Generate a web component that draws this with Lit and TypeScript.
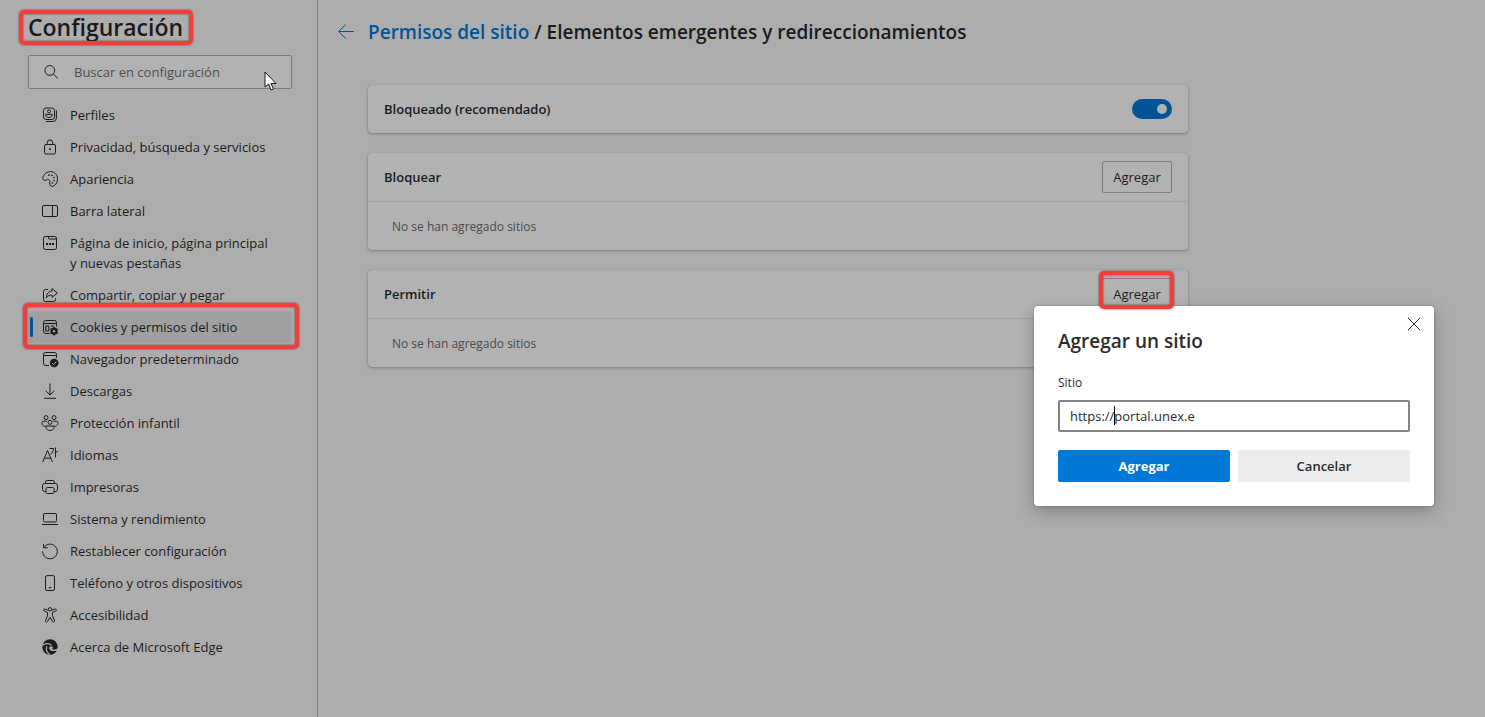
import { LitElement, html, css, svg, nothing } from "lit";
import { customElement, property, state } from "lit/decorators.js";
import { classMap } from "lit/directives/class-map.js";

const icons: Record<string, unknown> = {
  search: svg`<circle cx="6.8" cy="6.4" r="4.9"/><path d="M10.4 10 15 14.6"/>`,
  profiles: svg`<rect x="1.5" y="1" width="11" height="11.5" rx="2.6"/><circle cx="7" cy="4.4" r="1.5"/><path d="M3.8 7.4h6.4v.6c0 1.7-1.4 2.5-3.2 2.5S3.8 9.7 3.8 8z"/><path d="M14.4 3.2v7.8a3.5 3.5 0 0 1-3.5 3.5H4"/>`,
  lock: svg`<rect x="2.5" y="5.5" width="11" height="9.5" rx="1.5"/><path d="M5.3 5.5V3.6a2.7 2.7 0 0 1 5.4 0v1.9"/><circle cx="8" cy="10" r=".6" fill="currentColor"/>`,
  palette: svg`<path d="M.8 6.8C1.8 3 5 .6 8.6.6c4.2 0 7 3.2 6.9 7.2-.1 4-2.5 7.5-5.2 7.5-2 0-2.8-1.4-2.5-3.2.3-1.7.1-3.3-1.5-3.6-1.4-.3-2 1-3.4.8C1.3 9.1.5 8.1.8 6.8z"/><g fill="currentColor" stroke="none"><circle cx="7" cy="4.2" r=".85"/><circle cx="10" cy="4.3" r=".85"/><circle cx="12" cy="6.5" r=".85"/><circle cx="12" cy="9.5" r=".85"/><circle cx="10.5" cy="12" r=".85"/></g>`,
  sidebar: svg`<rect x=".5" y="2.5" width="15" height="11" rx="1.5"/><path d="M10.5 2.5v11"/>`,
  home: svg`<rect x="1.5" y="1.5" width="13" height="13" rx="1.8"/><path d="M6.5 1.5v1.5a1 1 0 0 0 1 1h7"/><g fill="currentColor" stroke="none"><path d="M4 8h2v2H4zM7 8h2v2H7zM10 8h2v2h-2z"/></g>`,
  share: svg`<path d="M6 2.5H3.5a2 2 0 0 0-2 2v8a2 2 0 0 0 2 2h8a2 2 0 0 0 2-2V11"/><path d="M10 1.5 15.3 6 10 10.3V8C7.2 8 5.5 9 4.3 10.8 4.6 7 6.5 4.2 10 4z"/>`,
  cookies: svg`<path d="M7.5 14.5H4a2.5 2.5 0 0 1-2.5-2.5V3.5a2 2 0 0 1 2-2h9a2 2 0 0 1 2 2v4M1.5 4.5h13"/><path d="M3.8 7h3v5h-3zM9 7h3"/><circle cx="12" cy="12.2" r="2.5" stroke-width="2.2"/><path d="M12 8v8.4M8.4 10.1l7.2 4.2M8.4 14.3l7.2-4.2" stroke-width="1.4"/><circle cx="12" cy="12.2" r="1.2" fill="#a0a0a0" stroke="none"/>`,
  browser: svg`<path d="M7 14.5H4a2.5 2.5 0 0 1-2.5-2.5V3.5a2 2 0 0 1 2-2h9a2 2 0 0 1 2 2V7M1.5 4.5h13"/><circle cx="12.2" cy="12" r="4.3" fill="currentColor" stroke="none"/><path d="m10.2 12.1 1.4 1.4 2.7-2.8" stroke="#adadad"/>`,
  download: svg`<path d="M8 .5v11.5M3.6 7.7 8 12.1l4.4-4.4M2 15.3h12"/>`,
  family: svg`<circle cx="4" cy="2.6" r="2"/><circle cx="12" cy="2.6" r="2"/><circle cx="8" cy="7.3" r="2"/><path d="M4.7 6.2H1.4C-.9 6.2-.6 11.3 3.6 11.3M11.3 6.2h3.3c2.3 0 2 5.1-2.2 5.1"/><path d="M4 11h8v1.2c0 2-1.7 3.3-4 3.3s-4-1.3-4-3.3z"/>`,
  language: svg`<path d="M.7 15.2 5.5 3.5l5 11.7M2.4 11.2h6.5M7.5 1.5h4c0 3-1 4.5-3 5.6M13.5.5v10M13.5 4.8h2.3"/>`,
  printer: svg`<path d="M4 12.5H2.7A2.2 2.2 0 0 1 .5 10.3V6.5a2 2 0 0 1 2-2h11a2 2 0 0 1 2 2v3.8a2.2 2.2 0 0 1-2.2 2.2H12"/><path d="M3.5 4.5V3.2a1.7 1.7 0 0 1 1.7-1.7h5.6a1.7 1.7 0 0 1 1.7 1.7v1.3"/><rect x="4" y="8.5" width="8" height="6" rx="1.3"/>`,
  laptop: svg`<rect x="1.5" y="2.5" width="13" height="8.5" rx="1.5"/><path d="M0 13.5h16"/>`,
  reset: svg`<path d="M1.5.8v4h4.3M1.8 4.6A7.3 7.3 0 1 1 .7 8.3"/>`,
  phone: svg`<rect x="3.5" y=".6" width="9" height="14.9" rx="1.6"/><path d="M6.7 12.7h2.6"/>`,
  access: svg`<circle cx="8" cy="2.3" r="1.7"/><path d="M6.3 3.4 3 2.1c-1.4-.5-2 1.4-.8 1.9l3.3 1.5v3.2l-2 5c-.4 1.4 1.3 2 1.9.9L8 10.3l2.6 4.3c.6 1.1 2.3.5 1.9-.9l-2-5V5.5L13.8 4c1.2-.5.6-2.4-.8-1.9L9.7 3.4"/>`,
  edge: svg`<circle cx="8" cy="8" r="7.7" fill="currentColor" stroke="none"/><path d="M.3 6.5C3 4 7.5 4 9.5 6.2M4.8 7.3c-1.1 3.2.2 6.3 3 8.2M8 8.2c-.7 2.4 1.7 4 6.8 2.6" stroke="#adadad" stroke-width="1.3"/><path d="M7.4 8.2a2.3 2.3 0 0 1 3.5.4c.2.9-.7 1.3-.7 1.9.7.7 3.2.5 5.8-1.2v1.5L11 12c-2.3 0-3.9-1.5-3.6-3.8z" fill="#adadad" stroke="none"/>`,
  back: svg`<path d="M16 7.5H.8M7.8.4.7 7.5l7.1 7.1" stroke="#005494"/>`,
  close: svg`<path d="m2 2 12 12M14 2 2 14"/>`,
};

const icon = (name: string) =>
  html`<svg class="icon" viewBox="0 0 16 16" fill="none" stroke="currentColor" aria-hidden="true">${icons[name]}</svg>`;

const base = css`
  * { box-sizing: border-box; }
  h1, h2, p { margin: 0; }
  button, input { font: inherit; color: inherit; margin: 0; }
  .icon { display: block; width: 16px; height: 16px; flex: none; overflow: visible; }
  .mark {
    position: absolute;
    border: 4px solid #f23d3d;
    border-radius: 5px;
    box-shadow: 0 0 2px #702c2c, inset 0 0 2px #702c2c;
    pointer-events: none;
    z-index: 3;
  }
`;

const sections = [
  ["profiles", "Perfiles"],
  ["lock", "Privacidad, búsqueda y servicios"],
  ["palette", "Apariencia"],
  ["sidebar", "Barra lateral"],
  ["home", "Página de inicio, página principal y nuevas pestañas"],
  ["share", "Compartir, copiar y pegar"],
  ["cookies", "Cookies y permisos del sitio"],
  ["browser", "Navegador predeterminado"],
  ["download", "Descargas"],
  ["family", "Protección infantil"],
  ["language", "Idiomas"],
  ["printer", "Impresoras"],
  ["laptop", "Sistema y rendimiento"],
  ["reset", "Restablecer configuración"],
  ["phone", "Teléfono y otros dispositivos"],
  ["access", "Accesibilidad"],
  ["edge", "Acerca de Microsoft Edge"],
];

@customElement("settings-nav")
export class SettingsNav extends LitElement {
  @state() private selected = "cookies";

  static styles = [base, css`
    :host { display: block; padding: 10px 25px 40px 28px; }
    .head { display: flex; }
    .title { position: relative; font-size: 23px; line-height: 34px; font-weight: 600; }
    .title .mark { inset: 0 -10px -1px -9px; }
    .search {
      display: flex; align-items: center; gap: 15px;
      position: relative;
      height: 34px; margin: 11px 0 10px; padding: 0 14px;
      border: 1px solid #7d7d7d; border-radius: 2px; background: #b2b2b2;
    }
    .field { flex: 1; min-width: 0; padding: 0; border: 0; background: none; outline: none; font-size: 13px; }
    .field::placeholder { color: #4e4e4e; opacity: 1; }
    .pointer { position: absolute; right: 14px; top: 15px; width: 13px; height: 20px; }
    .item {
      position: relative;
      display: flex; gap: 12px;
      padding: 6px 16px 6px 14px;
      border-radius: 2px;
      line-height: 20px;
      color: inherit; text-decoration: none;
    }
    .item .icon { margin-top: 2px; }
    .current { background: #a0a0a0; }
    .bar { position: absolute; left: 2px; top: 6px; width: 3px; height: 20px; border-radius: 2px; background: #005494; }
    .item .mark { inset: -8px -7px -6px -5px; }
  `];

  render() {
    return html`
      <div class="head"><h1 class="title">Configuración<span class="mark"></span></h1></div>
      <div class="search">
        ${icon("search")}
        <input class="field" type="search" placeholder="Buscar en configuración" aria-label="Buscar en configuración">
        <svg class="pointer" viewBox="0 0 13 20" aria-hidden="true"><path d="M1 1v15l3.5-3 2.5 6 2.5-1L7 12.500h5z" fill="#fff" stroke="#15151f"/></svg>
      </div>
      <nav>
        ${sections.map(([id, label]) => {
          const current = id === this.selected;
          return html`
            <a class=${classMap({ item: true, current })} href="#${id}" aria-current=${current ? "page" : nothing}
              @click=${() => (this.selected = id)}>
              ${current ? html`<span class="bar"></span><span class="mark"></span>` : nothing}
              ${icon(id)}<span>${label}</span>
            </a>`;
        })}
      </nav>`;
  }
}

@customElement("site-list")
export class SiteList extends LitElement {
  @property() heading = "";
  @property({ type: Boolean }) marked = false;

  static styles = [base, css`
    :host { display: block; border-radius: 4px; background: #b2b2b2; box-shadow: 0 1px 3px rgba(0, 0, 0, 0.28), 0 0 1px rgba(0, 0, 0, 0.2); }
    .top { display: flex; align-items: center; justify-content: space-between; height: 48px; padding: 0 16px; }
    .name { font-size: 13px; font-weight: 600; }
    .wrap { position: relative; }
    .add { display: block; width: 70px; height: 32px; padding: 0; border: 1px solid #7d7d7d; border-radius: 2px; background: none; }
    .mark { inset: -7px -2px 1px -3px; }
    .empty { padding: 15px 24px 13px; border-top: 1px solid #a1a1a1; font-size: 12px; line-height: 20px; color: #4a4a4a; }
  `];

  render() {
    return html`
      <div class="top">
        <h2 class="name">${this.heading}</h2>
        <div class="wrap">
          <button class="add" type="button">Agregar</button>
          ${this.marked ? html`<span class="mark"></span>` : nothing}
        </div>
      </div>
      <p class="empty">No se han agregado sitios</p>`;
  }
}

@customElement("add-site-dialog")
export class AddSiteDialog extends LitElement {
  static styles = [base, css`
    :host {
      display: block; width: 400px; padding: 20px 24px 24px;
      border-radius: 4px; background: #fff; color: #2b2b2b;
      box-shadow: 0 5px 16px rgba(0, 0, 0, 0.25), 0 0 3px rgba(0, 0, 0, 0.2);
    }
    .title { font-size: 19px; line-height: 30px; font-weight: 600; }
    .close { position: absolute; right: 12px; top: 10px; width: 16px; height: 16px; padding: 0; border: 0; background: none; }
    .label { display: block; margin: 17px 0 7px; font-size: 12px; line-height: 20px; }
    .box { position: relative; }
    .input { display: block; width: 100%; height: 32px; padding: 0 10px; border: 2px solid #848484; border-radius: 2px; background: #fff; outline: none; }
    .caret { position: absolute; left: 56px; top: 6px; width: 1px; height: 19px; background: #000; }
    .actions { display: grid; grid-template-columns: 1fr 1fr; gap: 8px; margin-top: 18px; }
    .action { height: 32px; border: 0; border-radius: 2px; background: #ececec; font-weight: 600; }
    .primary { background: #0078d7; color: #fff; font-weight: 700; }
  `];

  render() {
    return html`
      <form role="dialog" aria-labelledby="title" @submit=${(e: Event) => e.preventDefault()}>
        <button class="close" type="button" aria-label="Cerrar">${icon("close")}</button>
        <h2 class="title" id="title">Agregar un sitio</h2>
        <label class="label" for="site">Sitio</label>
        <div class="box">
          <input class="input" id="site" type="text" value="https://portal.unex.e">
          <span class="caret"></span>
        </div>
        <div class="actions">
          <button class="action primary" type="submit">Agregar</button>
          <button class="action" type="button">Cancelar</button>
        </div>
      </form>`;
  }
}

@customElement("app-root")
export class AppRoot extends LitElement {
  static styles = [base, css`
    :host {
      display: grid; grid-template-columns: 318px minmax(0, 1fr);
      position: relative; min-height: 100vh;
      background: #adadad; color: #1b1b1b;
      font: 13px/20px "Open Sans", "Noto Sans", sans-serif;
    }
    .side { border-right: 1px solid #7f7f7f; }
    .main { padding: 17px 20px 40px; }
    .crumbs { display: flex; align-items: center; gap: 14px; }
    .title { font-size: 19px; line-height: 30px; font-weight: 600; }
    .link { color: #005494; text-decoration: none; }
    .cards { display: grid; gap: 20px; max-width: 820px; margin: 38px 0 0 30px; }
    .card {
      display: flex; align-items: center; justify-content: space-between;
      height: 48px; padding: 0 16px; border-radius: 4px; background: #b2b2b2;
      box-shadow: 0 1px 3px rgba(0, 0, 0, 0.28), 0 0 1px rgba(0, 0, 0, 0.2);
    }
    .name { font-weight: 600; }
    .toggle { appearance: none; display: flex; align-items: center; justify-content: flex-end; width: 40px; height: 20px; margin: 0; padding: 0 5px; border-radius: 10px; background: #005494; }
    .toggle::before { content: ""; width: 10px; height: 10px; border-radius: 5px; background: #b2b2b2; }
    .toggle:not(:checked) { justify-content: flex-start; background: #666; }
    .dialog { position: absolute; right: 51px; top: 306px; z-index: 2; }
  `];

  render() {
    return html`
      <settings-nav class="side"></settings-nav>
      <main class="main">
        <div class="crumbs">
          <a class="link" href="#permisos" aria-label="Atrás">${icon("back")}</a>
          <h1 class="title"><a class="link" href="#permisos">Permisos del sitio</a> / Elementos emergentes y redireccionamientos</h1>
        </div>
        <div class="cards">
          <div class="card">
            <label class="name" for="blocked">Bloqueado (recomendado)</label>
            <input class="toggle" id="blocked" type="checkbox" role="switch" checked>
          </div>
          <site-list heading="Bloquear"></site-list>
          <site-list heading="Permitir" marked></site-list>
        </div>
      </main>
      <add-site-dialog class="dialog"></add-site-dialog>`;
  }
}
